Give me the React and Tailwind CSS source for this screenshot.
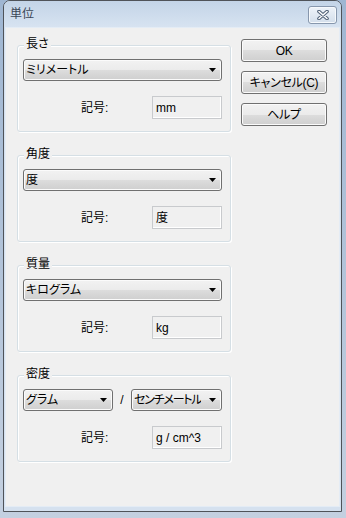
import React from 'react'

const FONT = { fontFamily: '"Liberation Sans", "Noto Sans CJK JP", sans-serif' }

function Arrow() {
  return (
    <svg width="7" height="4" viewBox="0 0 7 4" className="shrink-0">
      <polygon points="0,0 7,0 3.5,4" fill="#000" />
    </svg>
  )
}

function Combo({ value, className = 'w-[199px]', textClass = '' }) {
  return (
    <div className={`${className} h-[22px] flex items-center justify-between gap-[3px] pl-[2px] pr-[5px] border border-[#707070] rounded-[3px] shadow-[inset_0_0_0_1px_#fbfbfb] bg-[linear-gradient(to_bottom,#f2f2f2_0%,#ebebeb_50%,#dddddd_50%,#cfcfcf_100%)] text-[12px] text-black`}>
      <span className={`leading-none whitespace-nowrap overflow-hidden ${textClass}`}>{value}</span>
      <Arrow />
    </div>
  )
}

function SymbolRow({ value }) {
  return (
    <div className="flex items-center mt-[15px]">
      <span className="ml-[58px] text-[12px] text-black">記号:</span>
      <div className="ml-auto w-[70px] h-[23px] flex items-center pl-[3px] border border-[#c8cacd] shadow-[inset_-1px_-1px_0_#ffffff] bg-[#f0f0f0] text-[12px] text-black whitespace-nowrap">
        {value}
      </div>
    </div>
  )
}

function Group({ label, children }) {
  return (
    <div className="relative w-[214px] h-[87px] border border-[#d5dfe5] rounded-[3px] shadow-[inset_1px_1px_0_#ffffff,1px_1px_0_#ffffff] pt-[13px] pl-[5px] pr-[8px]">
      <span className="absolute -top-[9px] left-[6px] px-[2px] bg-[#f0f0f0] text-[12px] leading-[14px] text-black">{label}</span>
      {children}
    </div>
  )
}

function Btn({ children }) {
  return (
    <button className="w-[86px] h-[23px] flex items-center justify-center border border-[#707070] rounded-[3px] shadow-[inset_0_0_0_1px_#fbfbfb] bg-[linear-gradient(to_bottom,#f2f2f2_0%,#ebebeb_50%,#dddddd_50%,#cfcfcf_100%)] text-[12px] text-black whitespace-nowrap tracking-[-0.3px]">
      {children}
    </button>
  )
}

export default function App() {
  return (
    <div className="w-[346px] h-[518px] overflow-hidden bg-[linear-gradient(to_bottom,#9fb6d2,#c4d0e0)] pl-[3px] [font-feature-settings:'palt']" style={FONT}>
      <div className="w-[339px] h-[512px] flex flex-col border border-[#4f5359] rounded-t-[7px] bg-[#d5e1ef]">
        {/* Title bar */}
        <div className="h-[26px] flex items-start justify-between pl-[6px] pr-[4px] rounded-t-[6px] bg-[linear-gradient(to_bottom,#c3d4e7,#d7e3f1)]">
          <span className="mt-[5px] text-[12px] leading-[16px] text-[#3a4656]">単位</span>
          <div className="mt-[5px] w-[29px] h-[18px] flex items-center justify-center border border-[#8797ad] rounded-[3px] bg-[linear-gradient(to_bottom,#eef3f9,#d3deeb)] shadow-[inset_0_0_0_1px_#f6f9fc]">
            <svg width="12" height="10" viewBox="0 0 12 10">
              <path d="M2 1.5 L10 8.5 M10 1.5 L2 8.5" stroke="#4e5f75" strokeWidth="3.6" strokeLinecap="round" />
              <path d="M2 1.5 L10 8.5 M10 1.5 L2 8.5" stroke="#ffffff" strokeWidth="1.6" strokeLinecap="round" />
            </svg>
          </div>
        </div>

        {/* Client area */}
        <div className="flex-1 mx-[1px] mb-[4px] bg-[#f0f0f0] border border-[#e4ecf5] flex">
          <div className="pl-[11px] pt-[17px] flex flex-col gap-[23px]">
            <Group label="長さ">
              <Combo value="ミリメートル" />
              <SymbolRow value="mm" />
            </Group>
            <Group label="角度">
              <Combo value="度" />
              <SymbolRow value="度" />
            </Group>
            <Group label="質量">
              <Combo value="キログラム" />
              <SymbolRow value="kg" />
            </Group>
            <Group label="密度">
              <div className="flex items-center justify-between">
                <Combo value="グラム" className="w-[90px]" />
                <span className="text-[12px] text-black">/</span>
                <Combo value="センチメートル" className="w-[91px]" textClass="tracking-[-1.2px]" />
              </div>
              <SymbolRow value="g / cm^3" />
            </Group>
          </div>
          <div className="ml-[10px] pt-[11px] flex flex-col gap-[9px]">
            <Btn>OK</Btn>
            <Btn>キャンセル(C)</Btn>
            <Btn>ヘルプ</Btn>
          </div>
        </div>
      </div>
    </div>
  )
}
